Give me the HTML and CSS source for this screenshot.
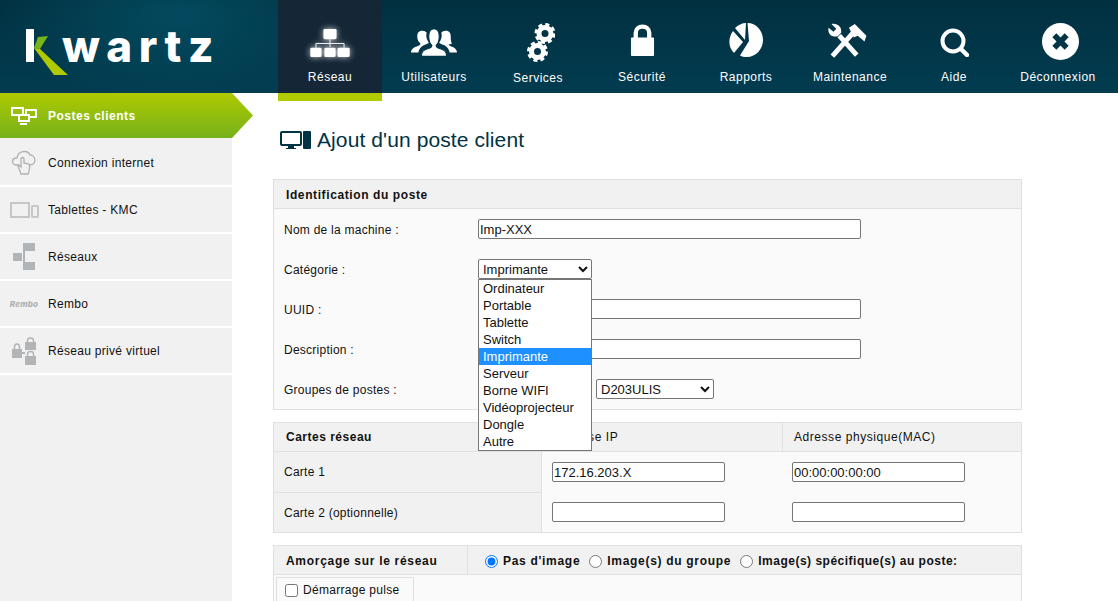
FILE: index.html
```html
<!DOCTYPE html>
<html lang="fr">
<head>
    <meta charset="UTF-8" />
    <meta name="viewport" content="width=device-width, initial-scale=1.0"/>
    <title>Ajout d'un poste client - Kwartz</title>
    <link rel="stylesheet" href="styles.css">
</head>
<body>
    <header class="top-bar">
        <div class="logo">
            <svg class="logo-k" width="44" height="46" viewBox="0 0 44 46">
                <rect x="0" y="0" width="8" height="33" fill="#fff"/>
                <polygon points="12,8 22,7 14,20 8,19" fill="#76b41c"/>
                <polygon points="8,19 14,20 42,46 28,46" fill="#afca00"/>
            </svg>
            <span class="logo-text">wartz</span>
        </div>
        <nav class="main-nav">
            <a class="nav-item active">
                <svg class="nav-icon icon-network" width="44" height="30" viewBox="0 0 44 32">
                    <rect x="15" y="1" width="14" height="11" rx="1.5" fill="#fff"/>
                    <path d="M22 12v8M7 21v-4.500h30V21" fill="none" stroke="#fff"/>
                    <rect x="1" y="21" width="12" height="10" rx="1.5" fill="#fff"/>
                    <rect x="16" y="21" width="12" height="10" rx="1.500" fill="#fff"/>
                    <rect x="30" y="21" width="13" height="10" rx="1.500" fill="#fff"/>
                </svg>
                <span>Réseau</span>
            </a>
            <a class="nav-item">
                <svg class="nav-icon icon-users" width="46" height="29" viewBox="0 0 44 32" preserveAspectRatio="none">
                    <path d="M0 27c0-4 3-6 6-7 3-1 3-2 3-3-2-2-3-4-3-8 0-4 2-6 5-6 2 0 3 1 4 2-1 4 0 8 2 11 0 1-2 2-5 3-3 2-4 4-5 8H0z" fill="#fff"/>
                    <path d="M44 27c0-4-3-6-6-7-2-1-2-2-2-2 2 0 3-1 3-1-1-3-1-5-1-8 0-3-1-6-5-6-2 0-3 1-4 2 1 4 0 8-2 11 0 1 2 2 5 3 3 2 4 4 5 8h7z" fill="#fff"/>
                    <path d="M10 31c0-5 2-7 6-8 3-1 4-2 4-4-2-2-3-5-3-10 0-5 2-8 5-8s5 3 5 8c0 5-1 8-3 10 0 2 1 3 4 4 4 1 6 3 6 8H10z" fill="#fff" stroke="#023546"/>
                </svg>
                <span>Utilisateurs</span>
            </a>
            <a class="nav-item">
                <svg class="nav-icon icon-gears" width="28" height="39" viewBox="0 0 28 39">
                    <circle cx="18" cy="10.500" r="6" fill="none" stroke="#fff" stroke-width="5"/>
                    <circle cx="18" cy="10.500" r="9" fill="none" stroke="#fff" stroke-width="3" stroke-dasharray="4 3.070"/>
                    <circle cx="10.500" cy="28.500" r="6" fill="none" stroke="#fff" stroke-width="5"/>
                    <circle cx="10.500" cy="28.500" r="9" fill="none" stroke="#fff" stroke-width="3" stroke-dasharray="4 3.070"/>
                </svg>
                <span class="label-low">Services</span>
            </a>
            <a class="nav-item">
                <svg class="nav-icon icon-lock" width="25" height="33" viewBox="0 0 26 34">
                    <path d="M6 15V9c0-4 3-6.500 7-6.500S20 5 20 9v6" fill="none" stroke="#fff" stroke-width="4.500"/>
                    <rect x="1" y="14" width="24" height="19" rx="1" fill="#fff"/>
                </svg>
                <span>Sécurité</span>
            </a>
            <a class="nav-item">
                <svg class="nav-icon icon-pie" width="34" height="34" viewBox="0 0 34 34">
                    <path d="M17 0l-1 17L6 5c3-3 7-5 11-5z" fill="#fff"/>
                    <path d="M18.500 0C27 0 34 7.500 34 17c0 9-7 17-16 17-3 0-5-.500-7-1.500L20 18z" fill="#fff"/>
                    <path d="M4 8l10 11-9 11C-1 24-1 15 4 8z" fill="#fff"/>
                </svg>
                <span>Rapports</span>
            </a>
            <a class="nav-item">
                <svg class="nav-icon icon-tools" width="40" height="35" viewBox="0 0 40 36">
                    <path d="M5 34l23-26" stroke="#fff" stroke-width="5" fill="none"/>
                    <path d="M22 5l6-4 12 12-2 6-7-6-4 2z" fill="#fff"/>
                    <path d="M30 33L12 13" stroke="#fff" stroke-width="5" fill="none"/>
                    <path d="M4 1l5 5-3 3-5-4c-1 5 2 9 6 9 2 0 3 0 4-1l3-3c1-5-3-10-10-9z" fill="#fff"/>
                </svg>
                <span>Maintenance</span>
            </a>
            <a class="nav-item">
                <svg class="nav-icon icon-help" width="29" height="29" viewBox="0 0 29 29">
                    <circle cx="13" cy="13" r="10.500" fill="none" stroke="#fff" stroke-width="4"/>
                    <path d="M21 21l6 6" stroke="#fff" stroke-width="4.500" stroke-linecap="round"/>
                </svg>
                <span>Aide</span>
            </a>
            <a class="nav-item">
                <svg class="nav-icon icon-logout" width="37" height="37" viewBox="0 0 36 36">
                    <circle cx="18" cy="18" r="18" fill="#fff"/>
                    <path d="M12 12l12 12M24 12L12 24" stroke="#023546" stroke-width="5.500"/>
                </svg>
                <span>Déconnexion</span>
            </a>
        </nav>
    </header>

    <div class="page">
        <aside class="side-menu">
            <a class="side-item active">
                <span class="side-icon">
                    <svg width="26" height="18" viewBox="0 0 26 18" fill="none" stroke="#fff" stroke-width="2">
                        <rect x="1" y="1" width="11" height="7"/>
                        <rect x="15" y="3" width="10" height="7"/>
                        <rect x="8" y="8" width="10" height="6" fill="#96bd0d"/>
                        <path d="M9 17h7" stroke-width="2"/>
                    </svg>
                </span>
                Postes clients
            </a>
            <a class="side-item">
                <span class="side-icon">
                    <svg width="26" height="26" viewBox="0 0 26 26" fill="none" stroke="#aeb1b3" stroke-width="1.300">
                        <path d="M8 15H6c-6 0-6-7 0-7 1-8 11-8 13-3 6 0 7 10 0 10h-1"/>
                        <path d="M10 24l-3-8c0-1 1-1 2 0l1 1V9c0-2 3-2 3 0v4l5 1c1 2 1 5-1 10z" fill="#f1f1f1"/>
                    </svg>
                </span>
                Connexion internet
            </a>
            <a class="side-item">
                <span class="side-icon">
                    <svg width="29" height="16" viewBox="0 0 29 16" fill="none" stroke="#c4c6c8" stroke-width="2">
                        <rect x="1" y="1" width="18" height="14"/>
                        <rect x="22" y="4" width="6" height="11" rx="1"/>
                    </svg>
                </span>
                Tablettes - KMC
            </a>
            <a class="side-item">
                <span class="side-icon">
                    <svg width="22" height="27" viewBox="0 0 22 27" fill="#b2b5b7">
                        <rect x="0" y="10" width="9" height="8"/>
                        <rect x="12" y="0" width="10" height="8"/>
                        <rect x="12" y="19" width="10" height="8"/>
                        <rect x="10" y="0" width="2" height="27"/>
                    </svg>
                </span>
                Réseaux
            </a>
            <a class="side-item">
                <span class="side-icon"><em class="rembo-mark">Rembo</em></span>
                Rembo
            </a>
            <a class="side-item">
                <span class="side-icon">
                    <svg width="25" height="28" viewBox="0 0 25 28" fill="#b2b5b7">
                        <path d="M0 12h10v9H0zM13 5h11v8H13zM13 19h11v9H13zM10 15h3v2h-3z"/>
                        <path d="M2.500 12V10c0-4 5-4 5 0v2M15.500 5V3.500c0-3.500 6-3.500 6 0V5M15.500 19v-2c0-3.500 6-3.500 6 0v2" fill="none" stroke="#b2b5b7" stroke-width="1.500"/>
                    </svg>
                </span>
                Réseau privé virtuel
            </a>
        </aside>

        <main class="content">
            <h1 class="page-title">
                <svg width="32" height="19" viewBox="0 0 32 19">
                    <rect x="1" y="1" width="20" height="13" rx="1" fill="none" stroke="#003344" stroke-width="2"/>
                    <path d="M8 15h6v2h2v1H6v-1h2z" fill="#003344"/>
                    <rect x="23" y="0" width="8" height="18" rx="1" fill="#003344"/>
                </svg>
                Ajout d'un poste client
            </h1>

            <section class="panel">
                <div class="panel-head">Identification du poste</div>
                <div class="form-row">
                    <label>Nom de la machine :</label>
                    <input type="text" class="wide" value="Imp-XXX" />
                </div>
                <div class="form-row">
                    <label>Catégorie :</label>
                    <div class="select-wrap">
                        <select class="cat-select">
                            <option>Imprimante</option>
                        </select>
                        <ul class="select-list">
                            <li>Ordinateur</li>
                            <li>Portable</li>
                            <li>Tablette</li>
                            <li>Switch</li>
                            <li class="selected">Imprimante</li>
                            <li>Serveur</li>
                            <li>Borne WIFI</li>
                            <li>Vidéoprojecteur</li>
                            <li>Dongle</li>
                            <li>Autre</li>
                        </ul>
                    </div>
                </div>
                <div class="form-row">
                    <label>UUID :</label>
                    <input type="text" class="wide" />
                </div>
                <div class="form-row">
                    <label>Description :</label>
                    <input type="text" class="wide" />
                </div>
                <div class="form-row">
                    <label>Groupes de postes :</label>
                    <select class="group-select">
                        <option>D203ULIS</option>
                    </select>
                </div>
            </section>

            <section class="panel cards">
                <div class="cell head-cell title-cell">Cartes réseau</div>
                <div class="cell head-cell">Adresse IP</div>
                <div class="cell head-cell">Adresse physique(MAC)</div>

                <div class="cell side-cell">Carte 1</div>
                <div class="cell input-cell first"><input type="text" value="172.16.203.X" /></div>
                <div class="cell input-cell first"><input type="text" value="00:00:00:00:00" /></div>

                <div class="cell side-cell">Carte 2 (optionnelle)</div>
                <div class="cell input-cell"><input type="text" /></div>
                <div class="cell input-cell"><input type="text" /></div>
            </section>

            <section class="panel boot">
                <div class="boot-head">
                    <div class="boot-title">Amorçage sur le réseau</div>
                    <div class="boot-options">
                        <label><input type="radio" name="boot" checked /> Pas d'image</label>
                        <label><input type="radio" name="boot" /> Image(s) du groupe</label>
                        <label class="last-option"><input type="radio" name="boot" /> Image(s) spécifique(s) au poste:</label>
                    </div>
                </div>
                <div class="boot-body">
                    <label class="pulse"><input type="checkbox" /> Démarrage pulse</label>
                </div>
            </section>
        </main>
    </div>
</body>
</html>
```

FILE: styles.css
```css
/* Basic Styles */
html, body {
    height: 601px;
    overflow: hidden;
}

body {
    margin: 0;
    font-family: 'Liberation Sans', Arial, sans-serif;
    font-size: 12px;
    letter-spacing: 0.25px;
    color: #111;
    background: #fff;
}

/* Top bar */
.top-bar {
    position: relative;
    z-index: 2;
    display: flex;
    height: 93px;
    background:
        radial-gradient(ellipse 190px 90px at 180px 15px, rgba(4, 82, 104, 0.75), rgba(4, 82, 104, 0)),
        linear-gradient(180deg, #013040, #023c50);
}

.logo {
    display: flex;
    align-items: flex-start;
    width: 278px;
    box-sizing: border-box;
    padding: 29px 0 0 26px;
}

.logo-k {
    flex: none;
}

.logo-text {
    margin: -6px 0 0 -8px;
    font-family: Inter, sans-serif;
    font-size: 44px;
    font-weight: 800;
    letter-spacing: 6.5px;
    line-height: 46px;
    color: #fff;
}

.main-nav {
    display: flex;
    align-items: flex-start;
}

.nav-item {
    display: flex;
    flex-direction: column;
    align-items: center;
    width: 104px;
    height: 93px;
    box-sizing: border-box;
    color: #fff;
    letter-spacing: 0.5px;
}

.nav-item span {
    margin-top: auto;
    padding-bottom: 8px;
    line-height: 16px;
}

.nav-item .label-low {
    padding-bottom: 7px;
}

.nav-item.active {
    height: 101px;
    background: #152736;
    border-bottom: 8px solid #afca00;
}

.icon-network {
    margin-top: 28px;
    filter: drop-shadow(0 0 3px rgba(255, 255, 255, 0.8));
}

.icon-users,
.icon-help {
    margin-top: 28px;
}

.icon-gears {
    margin: 23px 0 0 6px;
}

.icon-lock {
    margin-top: 24px;
}

.icon-pie {
    margin-top: 23px;
}

.icon-tools {
    margin: 23px 6px 0 0;
}

.icon-logout {
    margin: 23px 0 0 4px;
}

/* Layout */
.page {
    display: flex;
    height: 508px;
}

.side-menu {
    flex: none;
    width: 232px;
    background: #f1f1f1;
}

.side-item {
    display: flex;
    align-items: center;
    height: 45px;
    border-bottom: 2px solid #fff;
    color: #111;
    letter-spacing: 0.3px;
}

.side-item.active {
    position: relative;
    z-index: 1;
    width: 253px;
    height: 45px;
    margin-bottom: 1px;
    border-bottom: none;
    color: #fff;
    font-weight: bold;
    letter-spacing: 0.5px;
    background: linear-gradient(180deg, #afca00, #76b11b);
    clip-path: polygon(0 0, 232px 0, 100% 50%, 232px 100%, 0 100%);
}

.side-item:nth-child(2) {
    padding-top: 1px;
}

.side-icon {
    display: flex;
    flex: none;
    justify-content: center;
    align-items: center;
    width: 48px;
}

.rembo-mark {
    font-family: Inter, sans-serif;
    font-size: 8px;
    font-weight: 800;
    letter-spacing: 0.2px;
    color: #aeb1b3;
}

.content {
    width: 749px;
    height: 508px;
    margin-left: 41px;
    overflow: hidden;
}

.page-title {
    display: flex;
    align-items: center;
    gap: 5px;
    height: 30px;
    margin: 32px 0 24px 7px;
    font-size: 21px;
    font-weight: normal;
    letter-spacing: 0.1px;
    color: #003344;
}

/* Panels */
.panel {
    box-sizing: border-box;
    border: 1px solid #e0e0e0;
    background: #fafafa;
    margin-bottom: 12px;
}

.panel-head {
    height: 28px;
    padding-left: 12px;
    line-height: 30px;
    font-weight: bold;
    letter-spacing: 0.6px;
    background: #f1f1f1;
    border-bottom: 1px solid #e0e0e0;
}

.form-row {
    display: flex;
    align-items: center;
    height: 40px;
    padding-left: 10px;
}

.form-row label {
    flex: none;
    width: 194px;
    padding-top: 1px;
}

input[type="text"] {
    box-sizing: border-box;
    height: 20px;
    padding: 0 1px;
    border: 1px solid #767676;
    border-radius: 2px;
    background: #fff;
    font-family: inherit;
    font-size: 13px;
    letter-spacing: 0;
    color: #111;
}

.wide {
    width: 383px;
}

select {
    box-sizing: border-box;
    height: 20px;
    border: 1px solid #767676;
    border-radius: 2px;
    background-color: #fff;
    font-family: inherit;
    font-size: 13px;
    letter-spacing: 0;
    color: #111;
}

.select-wrap {
    position: relative;
    width: 114px;
    height: 20px;
}

.cat-select {
    width: 114px;
}

.group-select {
    width: 118px;
    margin-left: 118px;
}

.select-list {
    position: absolute;
    top: 20px;
    left: 0;
    z-index: 3;
    width: 114px;
    box-sizing: border-box;
    margin: 0;
    padding: 0;
    list-style: none;
    border: 1px solid #767676;
    background: #fff;
    font-size: 13px;
    letter-spacing: 0;
}

.select-list li {
    height: 17px;
    padding-left: 4px;
    line-height: 17px;
}

.select-list .selected {
    background: #1e90ff;
    color: #fff;
}

/* Cartes reseau */
.cards {
    display: grid;
    grid-template-columns: 268px 240px 1fr;
    grid-template-rows: 29px 40px 40px;
}

.cell {
    display: flex;
    align-items: center;
    padding-left: 10px;
}

.head-cell {
    background: #f1f1f1;
    border-bottom: 1px solid #e0e0e0;
    padding-left: 11px;
    letter-spacing: 0.55px;
}

.head-cell + .head-cell {
    border-left: 1px solid #e0e0e0;
}

.title-cell {
    padding-left: 12px;
    font-weight: bold;
    letter-spacing: 0.5px;
}

.side-cell {
    box-sizing: border-box;
    background: #f1f1f1;
    border-right: 1px solid #e0e0e0;
}

.side-cell:nth-child(7) {
    border-top: 1px solid #e0e0e0;
}

.input-cell input {
    width: 173px;
}

/* Amorcage */
.boot {
    margin: 0;
}

.boot-head {
    display: flex;
    height: 28px;
    background: #f1f1f1;
    border-bottom: 1px solid #e0e0e0;
    font-weight: bold;
    letter-spacing: 0.7px;
}

.boot-title {
    width: 181px;
    padding-left: 12px;
    line-height: 30px;
    border-right: 1px solid #e0e0e0;
}

.boot-options {
    display: flex;
    align-items: center;
    gap: 9px;
    padding: 2px 0 0 17px;
}

.boot-options label {
    display: flex;
    align-items: center;
    gap: 5px;
}

.boot-options .last-option {
    letter-spacing: 0.5px;
}

.boot-options input {
    margin: 0;
}

.boot-body {
    height: 60px;
    padding: 2px;
}

.pulse {
    display: flex;
    align-items: center;
    width: 138px;
    height: 26px;
    box-sizing: border-box;
    padding-left: 8px;
    border: 1px solid #e0e0e0;
    letter-spacing: 0.3px;
}

.pulse input {
    margin: 0 5px 0 0;
}
```
